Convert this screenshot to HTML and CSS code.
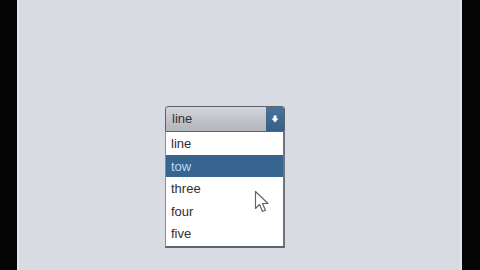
FILE: index.html
```html
<!DOCTYPE html>
<html>
<head>
<meta charset="utf-8">
<link rel="stylesheet" href="styles.css">
</head>
<body>
<div class="screen">
  <div class="bar"></div>
  <div class="stage">
    <div class="combo">
      <div class="head">
        <span class="value">line</span>
        <span class="btn">
          <svg width="8" height="8" viewBox="0 0 8 8"><path d="M2.5 0.5h3v3h2l-3.5 4l-3.5-4h2z" fill="#fff"/></svg>
        </span>
      </div>
      <ul class="list">
        <li>line</li>
        <li class="sel">tow</li>
        <li>three</li>
        <li>four</li>
        <li>five</li>
      </ul>
      <svg class="cursor" width="16" height="24" viewBox="0 0 16 24"><path d="M1.5 1.5v17l4-4 3 7 3-1.3-3-6.7h5.5z" fill="#fff" stroke="#666" stroke-width="1.2" stroke-linejoin="round"/></svg>
    </div>
  </div>
  <div class="bar right"></div>
</div>
</body>
</html>
```

FILE: styles.css
```css
html, body {
  margin: 0;
  padding: 0;
  background: #000;
  width: 480px;
  height: 270px;
  overflow: hidden;
}
.screen {
  display: flex;
  width: 480px;
  height: 270px;
}
.bar {
  width: 17px;
  background: #050505;
}
.bar.right {
  width: 18px;
}
.stage {
  flex: 1;
  background: #d9dbe2;
  border-left: 2px solid #e4e6ec;
  border-right: 2px solid #e2e4ea;
  padding: 106px 0 0 146px;
  box-sizing: border-box;
}
.combo {
  position: relative;
  width: 120px;
  font-family: "Liberation Sans", Arial, sans-serif;
  font-size: 13px;
}
.head {
  display: flex;
  height: 24px;
  border: 1px solid #5d636d;
  border-radius: 3px 3px 0 0;
  background: linear-gradient(#d4d5da, #bfc1c7 60%, #b4b6bc);
  box-sizing: border-box;
  height: 26px;
}
.value {
  flex: 1;
  padding-left: 6px;
  line-height: 24px;
  color: #2e2e33;
}
.btn {
  width: 18px;
  background: linear-gradient(#4a7299, #33608a);
  display: flex;
  align-items: center;
  justify-content: center;
  border-radius: 0 2px 0 0;
}
.list {
  list-style: none;
  margin: 0;
  padding: 0;
  background: #fff;
  border-left: 1px solid #8a8d94;
  border-right: 2px solid #6f737b;
  border-bottom: 2px solid #5e626a;
  box-sizing: border-box;
  padding-bottom: 1px;
}
.list li {
  height: 22.5px;
  line-height: 23px;
  padding-left: 5px;
  color: #2e2e33;
}
.list li.sel {
  background: #386490;
  color: #b4dcf6;
}
.cursor {
  position: absolute;
  left: 89px;
  top: 84px;
}
```
